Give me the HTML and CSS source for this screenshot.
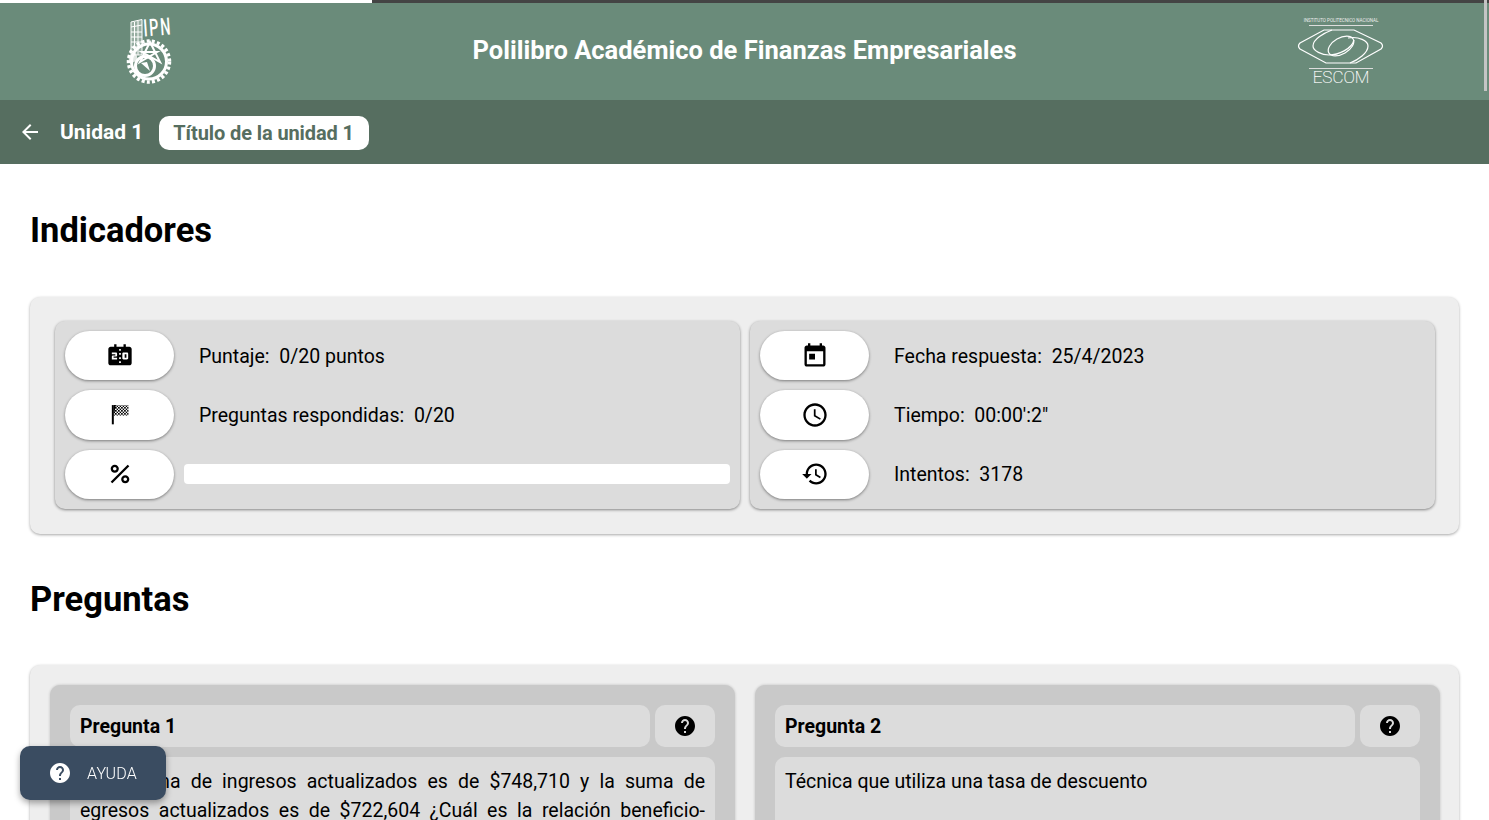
FILE: index.html
```html
<!DOCTYPE html>
<html lang="es">
<head>
    <meta charset="UTF-8">
    <meta name="viewport" content="width=device-width, initial-scale=1.0">
    <title>Polilibro Académico de Finanzas Empresariales</title>
    <link rel="stylesheet" href="styles.css">
</head>
<body>
    <div class="progreso-pagina"><div class="progreso-pagina-fill" style="width: 25%"></div></div>
    <header class="encabezado">
        <div class="logo">
            <svg width="50" height="70" viewBox="0 0 50 70">
                <!-- edificio -->
                <g fill="rgba(255,255,255,.3)" stroke="#fff" stroke-width="1">
                    <path d="M7 5 18 2.500V38H7z"/>
                    <path d="M7 10 18 8M7 15H18M7 20H18M7 25H18M7 30H18M10.500 5V38M14 4V38"/>
                </g>
                <text class="logo-ipn" transform="translate(20 19.500) rotate(-4) scale(.6 1)">IPN</text>
                <!-- engrane -->
                <circle cx="25" cy="44.500" r="20.500" fill="none" stroke="#fff" stroke-width="3.500" stroke-dasharray="3 2.200"/>
                <circle cx="25" cy="44.500" r="17.500" fill="none" stroke="#fff" stroke-width="3"/>
                <circle cx="21" cy="49" r="9.500" fill="none" stroke="#fff" stroke-width="3"/>
                <path d="M26 25 36 45 18 35H33L16 45z" fill="none" stroke="#fff" stroke-width="2"/>
                <path d="M17 46 26 54 23 45z" fill="#fff"/>
                <path d="M4 39 12 36 14 43 6 47z" fill="#fff" opacity=".8"/>
            </svg>
        </div>
        <h1 class="titulo">Polilibro Académico de Finanzas Empresariales</h1>
        <div class="logo">
            <svg width="90" height="70" viewBox="-1 0 90 70">
                <text class="logo-inst" x="45" y="5" text-anchor="middle">INSTITUTO POLITECNICO NACIONAL</text>
                <path d="M13 8.500H77M13 51.500H77" fill="none" stroke="#ddd" stroke-width="1.200"/>
                <g fill="none" stroke="#fff" stroke-width="1.200">
                    <path d="M28 13H58L85 26Q88 29 85 32L60 46H30L4 32Q1 29 4 26z"/>
                    <path d="M36 13C28 16 17 22 17 29 17 34 26 38 33 38"/>
                    <path d="M54 46C62 43 72 36 72 29 72 24 63 19 52 21"/>
                    <ellipse cx="45" cy="29" rx="14" ry="8" transform="rotate(-30 45 29)"/>
                    <path d="M33 38C42 38 56 32 58 23"/>
                </g>
                <text class="logo-escom" x="45" y="65.500" text-anchor="middle">ESCOM</text>
            </svg>
        </div>
    </header>
    <nav class="subencabezado">
        <svg class="icono icono-atras" viewBox="0 0 24 24"><path d="M20 11H7.830l5.590-5.590L12 4l-8 8 8 8 1.410-1.410L7.830 13H20v-2z"/></svg>
        <span class="unidad">Unidad 1</span>
        <span class="chip">Título de la unidad 1</span>
    </nav>

    <h2 class="seccion seccion-primera">Indicadores</h2>
    <section class="tarjeta indicadores">
        <div class="panel">
            <div class="fila">
                <div class="pastilla">
                    <svg class="icono icono-grande" viewBox="0 0 24 24"><path d="M17.500 13.500H16v-3h1.500v3zM20 4h-3V2h-2v2H9V2H7v2H4c-1.100 0-2 .9-2 2v12c0 1.100.9 2 2 2h16c1.100 0 2-.9 2-2V6c0-1.100-.9-2-2-2zM9.500 11.500c0 .55-.45 1-1 1h-2v1h3V15H5v-2.500c0-.55.45-1 1-1h2v-1H5V9h3.500c.55 0 1 .45 1 1v1.500zm3.250 6.500h-1.500v-1.500h1.500V18zm0-3.500h-1.500V13h1.500v1.500zm0-3.500h-1.500V9.500h1.500V11zm0-3.500h-1.500V6h1.500v1.500zM19 14c0 .55-.45 1-1 1h-3c-.55 0-1-.45-1-1v-4c0-.55.45-1 1-1h3c.55 0 1 .45 1 1v4z"/></svg>
                </div>
                <span class="dato">Puntaje:&nbsp; 0/20 puntos</span>
            </div>
            <div class="fila">
                <div class="pastilla">
                    <svg class="icono icono-grande" viewBox="0 0 24 24">
                        <defs>
                            <pattern id="cuadros" width="2.600" height="2.600" patternUnits="userSpaceOnUse">
                                <rect width="1.300" height="1.300"/>
                                <rect x="1.300" y="1.300" width="1.300" height="1.300"/>
                            </pattern>
                        </defs>
                        <path d="M5 3.500h1.700V20H5z"/>
                        <path d="M6.700 3.500H8.500L6.700 12.500z"/>
                        <rect x="6.700" y="3.500" width="12.600" height="9" fill="url(#cuadros)"/>
                    </svg>
                </div>
                <span class="dato">Preguntas respondidas:&nbsp; 0/20</span>
            </div>
            <div class="fila">
                <div class="pastilla">
                    <svg class="icono icono-grande" viewBox="0 0 24 24"><path d="M7.500 11C9.430 11 11 9.430 11 7.500S9.430 4 7.500 4 4 5.570 4 7.500 5.570 11 7.500 11zm0-5C8.330 6 9 6.670 9 7.500S8.330 9 7.500 9 6 8.330 6 7.500 6.670 6 7.500 6zM4.002 18.583 18.590 3.996l1.414 1.414L5.417 19.997zM16.500 13c-1.930 0-3.500 1.570-3.500 3.500s1.570 3.500 3.500 3.500 3.500-1.570 3.500-3.500-1.570-3.500-3.500-3.500zm0 5c-.83 0-1.500-.67-1.500-1.500s.67-1.500 1.500-1.500 1.500.67 1.500 1.500-.67 1.500-1.500 1.500z"/></svg>
                </div>
                <div class="barra"></div>
            </div>
        </div>
        <div class="panel">
            <div class="fila">
                <div class="pastilla">
                    <svg class="icono icono-grande" viewBox="0 0 24 24"><path d="M19 3h-1V1h-2v2H8V1H6v2H5c-1.110 0-1.990.9-1.990 2L3 19c0 1.100.89 2 2 2h14c1.100 0 2-.9 2-2V5c0-1.100-.9-2-2-2zm0 16H5V8h14v11zM7 10h5v5H7z"/></svg>
                </div>
                <span class="dato">Fecha respuesta:&nbsp; 25/4/2023</span>
            </div>
            <div class="fila">
                <div class="pastilla">
                    <svg class="icono icono-grande" viewBox="0 0 24 24"><path d="M11.990 2C6.470 2 2 6.480 2 12s4.470 10 9.990 10C17.520 22 22 17.520 22 12S17.520 2 11.990 2zM12 20c-4.420 0-8-3.580-8-8s3.580-8 8-8 8 3.580 8 8-3.580 8-8 8zm.5-13H11v6l5.250 3.150.75-1.230-4.500-2.670z"/></svg>
                </div>
                <span class="dato">Tiempo:&nbsp; 00:00':2"</span>
            </div>
            <div class="fila">
                <div class="pastilla">
                    <svg class="icono icono-grande" viewBox="0 0 24 24"><path d="M13 3c-4.970 0-9 4.030-9 9H1l3.890 3.890.07.14L9 12H6c0-3.870 3.130-7 7-7s7 3.130 7 7-3.130 7-7 7c-1.930 0-3.680-.79-4.940-2.060l-1.420 1.420C8.270 19.990 10.510 21 13 21c4.970 0 9-4.030 9-9s-4.030-9-9-9zm-1 5v5l4.280 2.540.72-1.210-3.500-2.080V8H12z"/></svg>
                </div>
                <span class="dato">Intentos:&nbsp; 3178</span>
            </div>
        </div>
    </section>

    <h2 class="seccion">Preguntas</h2>
    <section class="tarjeta preguntas">
        <article class="pregunta">
            <div class="pregunta-cabecera">
                <div class="pregunta-nombre">Pregunta 1</div>
                <div class="pregunta-ayuda">
                    <svg class="icono" viewBox="0 0 24 24"><path d="M12 2C6.480 2 2 6.480 2 12s4.480 10 10 10 10-4.480 10-10S17.520 2 12 2zm1 17h-2v-2h2v2zm2.070-7.750l-.9.920C13.450 12.900 13 13.500 13 15h-2v-.5c0-1.100.45-2.100 1.170-2.830l1.240-1.260c.37-.36.59-.86.59-1.410 0-1.100-.9-2-2-2s-2 .9-2 2H8c0-2.210 1.790-4 4-4s4 1.790 4 4c0 .88-.36 1.680-.93 2.250z"/></svg>
                </div>
            </div>
            <p class="pregunta-texto">Si la suma de ingresos actualizados es de $748,710 y la suma de egresos actualizados es de $722,604 ¿Cuál es la relación beneficio-costo?</p>
        </article>
        <article class="pregunta">
            <div class="pregunta-cabecera">
                <div class="pregunta-nombre">Pregunta 2</div>
                <div class="pregunta-ayuda">
                    <svg class="icono" viewBox="0 0 24 24"><path d="M12 2C6.480 2 2 6.480 2 12s4.480 10 10 10 10-4.480 10-10S17.520 2 12 2zm1 17h-2v-2h2v2zm2.070-7.750l-.9.920C13.450 12.900 13 13.500 13 15h-2v-.5c0-1.100.45-2.100 1.170-2.830l1.240-1.260c.37-.36.59-.86.59-1.410 0-1.100-.9-2-2-2s-2 .9-2 2H8c0-2.210 1.790-4 4-4s4 1.790 4 4c0 .88-.36 1.680-.93 2.250z"/></svg>
                </div>
            </div>
            <p class="pregunta-texto">Técnica que utiliza una tasa de descuento<br><br><br></p>
        </article>
    </section>

    <button class="boton-ayuda">
        <svg class="icono" viewBox="0 0 24 24"><path d="M12 2C6.480 2 2 6.480 2 12s4.480 10 10 10 10-4.480 10-10S17.520 2 12 2zm1 17h-2v-2h2v2zm2.070-7.750l-.9.920C13.450 12.900 13 13.500 13 15h-2v-.5c0-1.100.45-2.100 1.170-2.830l1.240-1.260c.37-.36.59-.86.59-1.410 0-1.100-.9-2-2-2s-2 .9-2 2H8c0-2.210 1.790-4 4-4s4 1.790 4 4c0 .88-.36 1.680-.93 2.250z"/></svg>
        Ayuda
    </button>
    <div class="barra-scroll"></div>
</body>
</html>
```

FILE: styles.css
```css
html, body {
    height: 100vh;
    overflow: hidden;
}
body {
    margin: 0;
    font-family: Roboto, "Liberation Sans", sans-serif;
    background-color: #fff;
    color: #000;
}
.progreso-pagina {
    height: 3px;
    background-color: #444;
}
.progreso-pagina-fill {
    height: 100%;
    background-color: #fff;
}
.encabezado {
    display: grid;
    grid-template-columns: 1fr 3fr 1fr;
    align-items: center;
    height: 97px;
    background-color: #6a8b7a;
}
.logo {
    display: flex;
    justify-content: center;
}
.logo-ipn {
    font-size: 24px;
    font-weight: 500;
    letter-spacing: 3px;
    fill: #fff;
}
.logo-inst {
    font-size: 4.500px;
    fill: #eee;
}
.logo-escom {
    font-size: 17px;
    font-weight: 100;
    stroke: #fff;
    stroke-width: .2px;
    fill: #fff;
}
.titulo {
    margin: 0 0 3px;
    text-align: center;
    font-size: 25.500px;
    font-weight: 700;
    color: #fff;
}
.subencabezado {
    display: flex;
    align-items: center;
    height: 64px;
    padding-left: 18px;
    background-color: #566e60;
    color: #fff;
    font-size: 20px;
    font-weight: 700;
}
.icono {
    display: block;
    flex: none;
    width: 24px;
    height: 24px;
    fill: currentColor;
}
.icono-grande {
    width: 28px;
    height: 28px;
}
.icono-atras {
    margin-right: 18px;
}
.unidad {
    margin-right: 16px;
    font-size: 21px;
}
.chip {
    margin-top: 2px;
    padding: 0 15px 0 14px;
    line-height: 34px;
    letter-spacing: -0.1px;
    background-color: #fff;
    border-radius: 10px;
    color: #566e60;
}
.seccion {
    margin: 44px 30px 45px;
    font-size: 34.500px;
    font-weight: 700;
    line-height: 42px;
}
.seccion-primera {
    margin: 45px 30px 46px;
}
.tarjeta {
    display: grid;
    grid-template-columns: 1fr 1fr;
    margin: 0 30px;
    background-color: #eee;
    border-radius: 10px;
    box-shadow: 0 1px 3px rgba(0, 0, 0, 0.35);
}
.indicadores {
    column-gap: 10px;
    padding: 24px 24px 25px 25px;
}
.panel {
    display: flex;
    flex-direction: column;
    gap: 10px;
    padding: 10px;
    background-color: #dcdcdc;
    border-radius: 10px;
    box-shadow: 0 1px 3px rgba(0, 0, 0, 0.45);
}
.fila {
    display: flex;
    align-items: center;
}
.pastilla {
    display: flex;
    align-items: center;
    justify-content: center;
    flex: none;
    width: 109px;
    height: 49.330px;
    background-color: #fff;
    border-radius: 25px;
    box-shadow: 0 1px 3px rgba(0, 0, 0, 0.45);
}
.dato {
    margin-left: 25px;
    padding-top: 1px;
    font-size: 19.500px;
}
.barra {
    flex: 1;
    height: 20px;
    margin-left: 10px;
    background-color: #fff;
    border-radius: 4px;
}
.preguntas {
    column-gap: 20px;
    padding: 20px 19px 20px 20px;
}
.pregunta {
    padding: 20px;
    background-color: #c9c9c9;
    border-radius: 10px;
    box-shadow: 0 0 3px rgba(0, 0, 0, 0.2);
}
.pregunta-cabecera {
    display: flex;
    gap: 5px;
    height: 42px;
}
.pregunta-nombre {
    flex: 1;
    padding-left: 10px;
    line-height: 43px;
    font-size: 19.500px;
    font-weight: 700;
    background-color: #dcdcdc;
    border-radius: 10px;
}
.pregunta-ayuda {
    display: flex;
    align-items: center;
    justify-content: center;
    width: 60px;
    background-color: #dcdcdc;
    border-radius: 10px;
}
.pregunta-texto {
    margin: 10px 0 0;
    padding: 10px;
    font-size: 19.500px;
    line-height: 29px;
    text-align: justify;
    background-color: #dcdcdc;
    border-radius: 10px;
}
.boton-ayuda {
    position: fixed;
    left: 20px;
    bottom: 20px;
    display: flex;
    align-items: center;
    gap: 15px;
    width: 146px;
    height: 54px;
    padding: 0 0 0 28px;
    font-family: Roboto, "Liberation Sans", sans-serif;
    font-size: 16px;
    font-weight: 300;
    letter-spacing: .2px;
    text-transform: uppercase;
    color: #fff;
    background-color: #3a4c61;
    border: none;
    border-radius: 10px;
    box-shadow: 0 3px 6px rgba(0, 0, 0, 0.35);
}
.barra-scroll {
    position: fixed;
    top: 0;
    right: 2px;
    width: 3px;
    height: 91px;
    background-color: #c4c4c4;
}
```
